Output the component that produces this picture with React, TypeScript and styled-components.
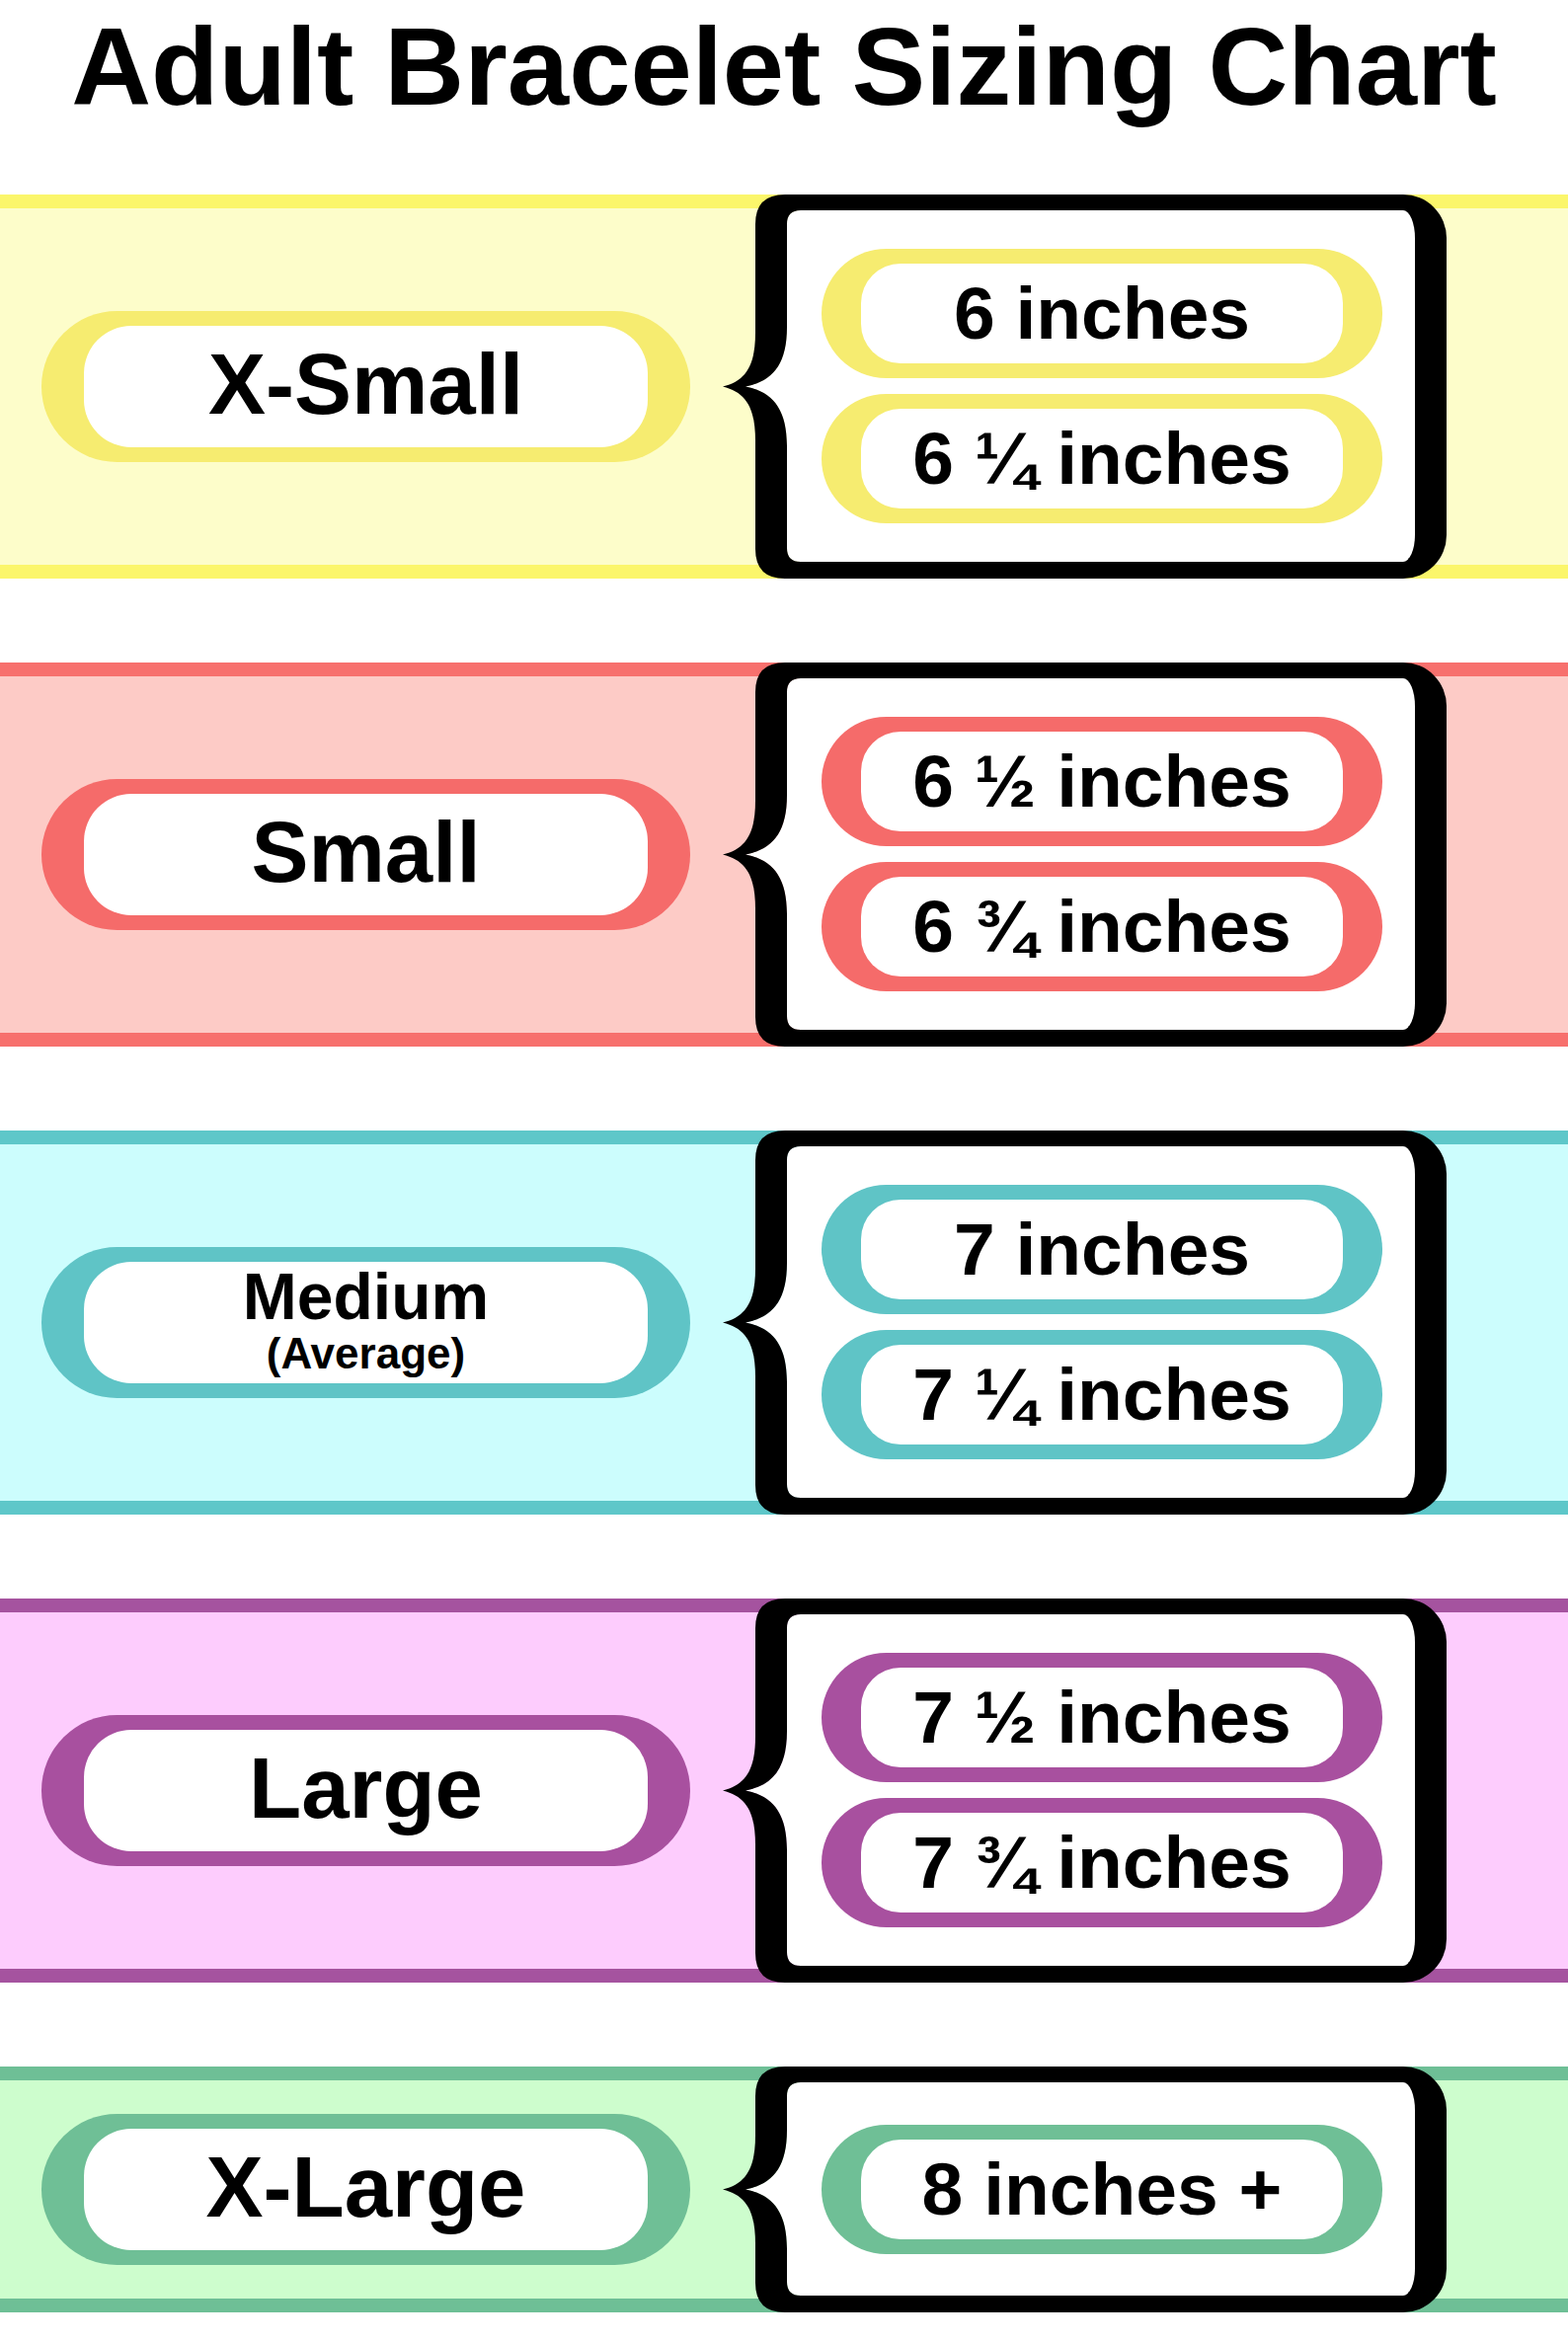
import React from "react";
import styled, { createGlobalStyle } from "styled-components";

const GlobalStyle = createGlobalStyle`
  html, body { margin: 0; padding: 0; background: #ffffff; }
  body { font-family: "Liberation Sans", Arial, Helvetica, sans-serif; }
`;

const Page = styled.main`
  width: 1588px;
  min-height: 2371px;
  background: #ffffff;
  display: flex;
  flex-direction: column;
`;

const Title = styled.h1`
  margin: 0;
  height: 197px;
  box-sizing: border-box;
  padding-top: 12px;
  font-size: 112px;
  line-height: 112px;
  font-weight: 700;
  text-align: center;
  color: #000000;
`;

const BandList = styled.div`
  display: flex;
  flex-direction: column;
  gap: 85px;
`;

const Band = styled.section<{ $fill: string; $stripe: string; $h: number }>`
  height: ${(p) => p.$h}px;
  box-sizing: border-box;
  background: ${(p) => p.$fill};
  box-shadow: inset 0 14px 0 ${(p) => p.$stripe}, inset 0 -14px 0 ${(p) => p.$stripe};
  display: flex;
  align-items: center;
  padding-left: 42px;
`;

const SizeRing = styled.div<{ $ring: string }>`
  flex-shrink: 0;
  width: 657px;
  height: 153px;
  box-sizing: border-box;
  padding: 15px 43px;
  border-radius: 77px;
  background: ${(p) => p.$ring};
`;

const SizeFace = styled.div`
  height: 100%;
  background: #ffffff;
  border-radius: 48px;
  display: flex;
  flex-direction: column;
  align-items: center;
  justify-content: center;
  padding-bottom: 6px;
  box-sizing: border-box;
  color: #000000;
  font-weight: 700;
`;

const SizeName = styled.span<{ $small?: boolean }>`
  font-size: ${(p) => (p.$small ? 66 : 87)}px;
  line-height: ${(p) => (p.$small ? 1.08 : 1)};
`;

const SizeNote = styled.span`
  font-size: 44px;
  line-height: 1.08;
  margin-top: -2px;
`;

const BraceBox = styled.div`
  flex-shrink: 0;
  align-self: stretch;
  margin-left: 33px;
  width: 733px;
  display: flex;
`;

const BraceArt = styled.svg`
  display: block;
  flex-shrink: 0;
`;

const BracePanel = styled.div`
  flex: 1;
  background: #ffffff;
  border-style: solid;
  border-color: #000000;
  border-width: 16px 32px 17px 0;
  border-radius: 0 44px 44px 0;
  padding: 0 33px 0 10px;
  display: flex;
  flex-direction: column;
  justify-content: center;
  gap: 16px;
`;

const RangeRing = styled.div<{ $ring: string }>`
  height: 131px;
  box-sizing: border-box;
  padding: 15px 40px;
  border-radius: 66px;
  background: ${(p) => p.$ring};
`;

const RangeFace = styled.div`
  height: 100%;
  background: #ffffff;
  border-radius: 40px;
  display: flex;
  align-items: center;
  justify-content: center;
  font-size: 75px;
  font-weight: 700;
  line-height: 1;
  color: #000000;
  white-space: nowrap;
`;

function Brace({ h }: { h: number }) {
  const m = h / 2;
  const W = 90;
  const black = `M${W},0 L63,0 Q33,0 33,30 L33,${m - 55} C33,${m - 22} 24,${m - 6} 0,${m} C24,${m + 6} 33,${m + 22} 33,${m + 55} L33,${h - 30} Q33,${h} 63,${h} L${W},${h} L${W},${h - 17} L79,${h - 17} Q65,${h - 17} 65,${h - 31} L65,${m + 60} C65,${m + 22} 50,${m + 5} 23,${m} C50,${m - 5} 65,${m - 22} 65,${m - 60} L65,30 Q65,16 79,16 L${W},16 Z`;
  const white = `M${W},16 L79,16 Q65,16 65,30 L65,${m - 60} C65,${m - 22} 50,${m - 5} 23,${m} C50,${m + 5} 65,${m + 22} 65,${m + 60} L65,${h - 31} Q65,${h - 17} 79,${h - 17} L${W},${h - 17} Z`;
  return (
    <BraceArt width={W} height={h} viewBox={`0 0 ${W} ${h}`}>
      <path d={white} fill="#ffffff" />
      <path d={black} fill="#000000" />
    </BraceArt>
  );
}

type SizeRow = {
  name: string;
  note?: string;
  ranges: string[];
  fill: string;
  stripe: string;
  ring: string;
  h: number;
};

const rows: SizeRow[] = [
  { name: "X-Small", ranges: ["6 inches", "6 ¼ inches"], fill: "#fdfdca", stripe: "#fbf66b", ring: "#f6ec70", h: 389 },
  { name: "Small", ranges: ["6 ½ inches", "6 ¾ inches"], fill: "#fdcbc6", stripe: "#f7706d", ring: "#f56b6a", h: 389 },
  { name: "Medium", note: "(Average)", ranges: ["7 inches", "7 ¼ inches"], fill: "#ccfdfd", stripe: "#5ec7c9", ring: "#5fc4c6", h: 389 },
  { name: "Large", ranges: ["7 ½ inches", "7 ¾ inches"], fill: "#fdccfd", stripe: "#a5539f", ring: "#a8509f", h: 389 },
  { name: "X-Large", ranges: ["8 inches +"], fill: "#cdfdcd", stripe: "#6ebf96", ring: "#6fbf96", h: 249 },
];

export default function App() {
  return (
    <>
      <GlobalStyle />
      <Page>
        <Title>Adult Bracelet Sizing Chart</Title>
        <BandList>
          {rows.map((r) => (
            <Band key={r.name} $fill={r.fill} $stripe={r.stripe} $h={r.h}>
              <SizeRing $ring={r.ring}>
                <SizeFace>
                  <SizeName $small={!!r.note}>{r.name}</SizeName>
                  {r.note && <SizeNote>{r.note}</SizeNote>}
                </SizeFace>
              </SizeRing>
              <BraceBox>
                <Brace h={r.h} />
                <BracePanel>
                  {r.ranges.map((t) => (
                    <RangeRing key={t} $ring={r.ring}>
                      <RangeFace>{t}</RangeFace>
                    </RangeRing>
                  ))}
                </BracePanel>
              </BraceBox>
            </Band>
          ))}
        </BandList>
      </Page>
    </>
  );
}
